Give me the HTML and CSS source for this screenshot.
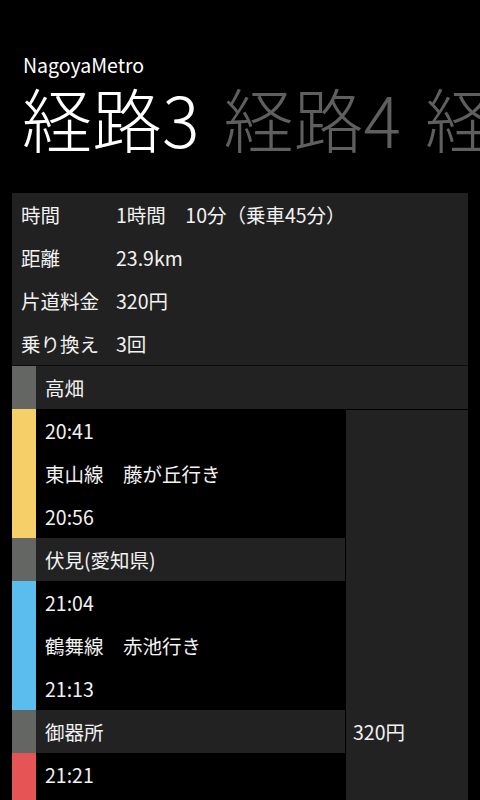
FILE: index.html
```html
<!DOCTYPE html>
<html lang="ja">
<head>
<meta charset="utf-8">
<title>NagoyaMetro</title>
<link rel="stylesheet" href="styles.css">
</head>
<body>
<div class="app">
  <header class="header">
    <div class="app-title">NagoyaMetro</div>
    <div class="pivot">
      <span class="pivot-item active">経路3</span>
      <span class="pivot-item">経路4</span>
      <span class="pivot-item">経路5</span>
    </div>
  </header>

  <section class="panel">
    <div class="summary">
      <div class="sum-row"><span class="label">時間</span><span class="value">1時間　10分（乗車45分）</span></div>
      <div class="sum-row"><span class="label">距離</span><span class="value">23.9km</span></div>
      <div class="sum-row"><span class="label">片道料金</span><span class="value">320円</span></div>
      <div class="sum-row"><span class="label">乗り換え</span><span class="value">3回</span></div>
    </div>

    <div class="station">
      <span class="bar bar-gray"></span>
      <span class="station-name">高畑</span>
    </div>

    <div class="route">
      <div class="segment seg-a">
        <span class="bar bar-yellow"></span>
        <div class="seg-lines">
          <div class="line">20:41</div>
          <div class="line">東山線　藤が丘行き</div>
          <div class="line">20:56</div>
        </div>
      </div>

      <div class="fare-col"></div>

      <div class="station st-b">
        <span class="bar bar-gray"></span>
        <span class="station-name">伏見(愛知県)</span>
      </div>

      <div class="segment seg-b">
        <span class="bar bar-blue"></span>
        <div class="seg-lines">
          <div class="line">21:04</div>
          <div class="line">鶴舞線　赤池行き</div>
          <div class="line">21:13</div>
        </div>
      </div>

      <div class="station st-c">
        <span class="bar bar-gray"></span>
        <span class="station-name">御器所</span>
      </div>
      <div class="fare">320円</div>

      <div class="segment seg-c">
        <span class="bar bar-red"></span>
        <div class="seg-lines">
          <div class="line">21:21</div>
          <div class="line">桜通線　徳重行き</div>
          <div class="line">21:40</div>
        </div>
      </div>
    </div>
  </section>
</div>
</body>
</html>
```

FILE: styles.css
```css
* {
  box-sizing: border-box;
}

html, body {
  margin: 0;
  padding: 0;
  background: #000;
}

body {
  width: 480px;
  height: 800px;
  overflow: hidden;
  color: #f2f2f2;
  font-family: "Noto Sans CJK JP", "Noto Sans", sans-serif;
}

.header {
  padding-top: 53px;
  padding-left: 23px;
  overflow: hidden;
  white-space: nowrap;
}

.app-title {
  font-size: 19.5px;
  line-height: 24px;
  color: #fff;
}

.pivot {
  margin-top: 6px;
  margin-left: -1px;
  display: flex;
  gap: 24px;
  font-size: 70px;
  line-height: 70px;
  font-weight: 300;
}

.pivot-item {
  color: #5f5f5f;
  flex: none;
}

.pivot-item.active {
  color: #fff;
}

.panel {
  margin: 40px 12px 0;
  width: 456px;
  font-size: 19.5px;
}

.summary {
  background: #212121;
  padding-left: 9px;
  border-bottom: 1px solid #0b0b0b;
}

.sum-row {
  display: grid;
  grid-template-columns: 95px 1fr;
  height: 43px;
  line-height: 43px;
  white-space: nowrap;
}

.station {
  display: flex;
  height: 43px;
  line-height: 43px;
  background: #222;
}

.bar {
  flex: none;
  width: 24px;
  align-self: stretch;
}

.bar-gray { background: #646664; }
.bar-yellow { background: #f7cf68; }
.bar-blue { background: #5bbdee; }
.bar-red { background: #e65555; }

.station-name {
  padding-left: 9px;
  white-space: nowrap;
}

.route {
  display: grid;
  grid-template-columns: 333px 122px;
  grid-template-rows: 129px 43px 129px 43px 129px;
  column-gap: 1px;
  background: #000;
}

.segment {
  display: flex;
  grid-column: 1;
}

.seg-lines {
  padding-left: 9px;
}

.line {
  height: 43px;
  line-height: 43px;
  white-space: nowrap;
}

.seg-a { grid-row: 1; }
.st-b { grid-column: 1; grid-row: 2; }
.seg-b { grid-row: 3; }
.st-c { grid-column: 1; grid-row: 4; }
.seg-c { grid-row: 5; }

.fare-col {
  grid-column: 2;
  grid-row: 1 / -1;
  margin-top: 1px;
  background: #222;
}

.fare {
  grid-column: 2;
  grid-row: 4;
  padding-left: 7px;
  line-height: 43px;
  white-space: nowrap;
}
```
